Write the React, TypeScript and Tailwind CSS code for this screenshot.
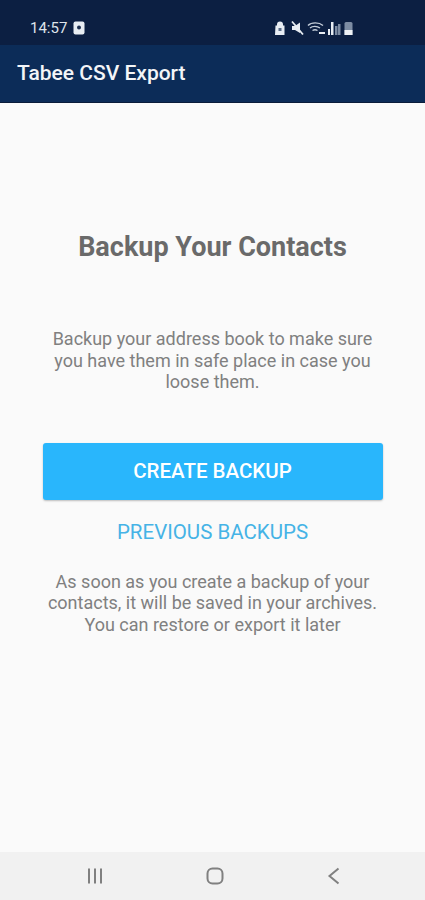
import React from 'react';

const StatusIcons = () => (
    <svg width="80" height="16" viewBox="0 0 80 16" fill="none">
        {/* lock */}
        <path d="M0.500 5.500h1.500V4.500a3 3 0 0 1 6 0v1h1.500V15h-9.500z" fill="#e8edf3" />
        <rect x="3.500" y="8" width="3" height="3" fill="#5a6c88" />
        {/* muted speaker */}
        <path d="M17 6h3l5-3.500v10.500l-5-3h-3z" fill="#e8edf3" />
        <path d="M17 1.500l11 13" stroke="#e8edf3" strokeWidth="1.800" />
        {/* wifi */}
        <path d="M33 5.500c3.500-3.500 11-3.500 15 0M35 8c2.500-2.200 7-2.200 10 0M37.500 10.500c1.500-1 3.500-1 5 0" stroke="#c5ceda" strokeWidth="1.400" />
        <path d="M44 13h6" stroke="#e8edf3" strokeWidth="2" />
        {/* signal bars */}
        <rect x="53" y="9" width="2" height="6" fill="#e8edf3" />
        <rect x="56" y="2" width="2.500" height="13" fill="#e8edf3" />
        <rect x="60" y="6" width="2.500" height="9" fill="#7d8ca3" />
        <rect x="63" y="4" width="2.500" height="11" fill="#7d8ca3" />
        {/* battery */}
        <path d="M69.500 3.500q0-1.500 1.500-1.500h5q1.500 0 1.500 1.500V15h-8z" fill="#7d8ca3" />
        <rect x="69.500" y="10" width="8" height="5" fill="#eef1f5" />
    </svg>
);

export default function App() {
    return (
        <div className="w-[425px] h-[900px] flex flex-col bg-[#fafafa] font-['Roboto',sans-serif]">
            {/* Status bar */}
            <div className="h-[45px] shrink-0 bg-[#0c1f42] flex items-center justify-between pl-[30px] pr-[70px] pt-[11px]">
                <div className="flex items-center gap-[6px]">
                    <span className="text-[15px] text-[#dfe4eb]">14:57</span>
                    <svg width="12" height="14" viewBox="0 0 12 14">
                        <rect x="0.500" y="0.500" width="11" height="13" rx="2" fill="#e8edf3" />
                        <circle cx="6" cy="6.500" r="2" fill="#1c2e4f" />
                    </svg>
                </div>
                <StatusIcons />
            </div>

            {/* App bar */}
            <div className="h-[58px] shrink-0 bg-[#0c2c58] border-b border-[#0a1c3a] flex items-center px-[17px]">
                <h1 className="text-[21px] font-medium text-[#f3f5f8]">Tabee CSV Export</h1>
            </div>

            {/* Content */}
            <main className="flex-1 flex flex-col items-center text-center">
                <h2 className="mt-[127px] text-[27px] leading-[34px] font-bold text-[#6a6a6a]">Backup Your Contacts</h2>
                <p className="mt-[64px] w-[335px] text-[18px] leading-[21.500px] text-[#808080]">
                    Backup your address book to make sure you have them in safe place in case you loose them.
                </p>
                <button className="mt-[50px] w-[340px] h-[57px] rounded-[3px] bg-[#29b6fc] shadow-[0_1px_2px_rgba(0,0,0,0.25)] text-[20.500px] font-medium text-white">
                    CREATE BACKUP
                </button>
                <button className="mt-[18px] text-[20.500px] leading-[28px] text-[#45b3e6]">PREVIOUS BACKUPS</button>
                <p className="mt-[25px] w-[335px] text-[18px] leading-[21.500px] text-[#808080]">
                    As soon as you create a backup of your contacts, it will be saved in your archives. You can restore or export it later
                </p>
            </main>

            {/* Nav bar */}
            <div className="h-[48px] shrink-0 bg-[#f1f1f1] flex items-center justify-between pl-[85px] pr-[81px]">
                <svg width="20" height="20" viewBox="0 0 20 20" stroke="#808080" strokeWidth="2">
                    <path d="M4 2.500v15M10 2.500v15M16 2.500v15" />
                </svg>
                <svg width="20" height="20" viewBox="0 0 20 20" fill="none" stroke="#808080" strokeWidth="2">
                    <rect x="2.500" y="2.500" width="15" height="15" rx="5" />
                </svg>
                <svg width="20" height="20" viewBox="0 0 20 20" fill="none" stroke="#808080" strokeWidth="2">
                    <path d="M14.500 2.500L5.500 10l9 7.500" />
                </svg>
            </div>
        </div>
    );
}
